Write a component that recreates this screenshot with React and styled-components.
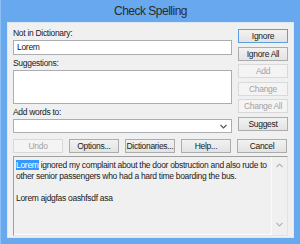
import React from "react";
import styled, { createGlobalStyle } from "styled-components";

const Global = createGlobalStyle`
  html, body { margin: 0; padding: 0; background: #fff; }
  body { font-family: "Liberation Sans", Arial, sans-serif; }
`;

const Frame = styled.div`
  width: 300px;
  height: 244px;
  box-sizing: border-box;
  background: #67a8ef;
  border-left: 1px solid #8fc0f5;
  padding: 0 6px 6px 6px;
  display: flex;
  flex-direction: column;
`;

const TitleBar = styled.div`
  height: 22px;
  display: flex;
  align-items: center;
  justify-content: center;
  font-size: 12px;
  letter-spacing: -0.5px;
  color: #2b2b2b;
`;

const Client = styled.div`
  flex: 1;
  background: #f0f0f0;
  border: 1px solid #dbe8f6;
  padding: 4px 5px 1px 5px;
  display: flex;
  flex-direction: column;
  font-family: "Liberation Sans", Arial, sans-serif;
  font-size: 8.5px;
  letter-spacing: -0.3px;
  color: #1a1a1a;
`;

const Top = styled.div`
  display: grid;
  grid-template-columns: 219px 50px;
  column-gap: 6px;
`;

const LeftCol = styled.div`
  display: flex;
  flex-direction: column;
`;

const Label = styled.div`
  height: 11px;
  line-height: 11px;
  margin-top: ${(p) => p.$mt || 0}px;
  margin-bottom: 1px;
  white-space: nowrap;
`;

const TextBox = styled.div`
  box-sizing: border-box;
  height: ${(p) => p.$h}px;
  background: #fff;
  border: 1px solid #abadb3;
  padding: 0 3px;
  line-height: ${(p) => p.$h - 2}px;
  display: flex;
  align-items: center;
  justify-content: space-between;
`;

const Chevron = styled.svg`
  width: 7px;
  height: 5px;
  margin-right: 1px;
`;

const RightCol = styled.div`
  display: flex;
  flex-direction: column;
  gap: 3.5px;
  padding-top: 2px;
`;

const Button = styled.div`
  box-sizing: border-box;
  width: 50px;
  height: 14px;
  display: flex;
  align-items: center;
  justify-content: center;
  white-space: nowrap;
  background: ${(p) => (p.$disabled ? "#f4f4f4" : "linear-gradient(#f2f2f2, #e3e3e3)")};
  border: 1px solid
    ${(p) => (p.$default ? "#5c9fe0" : p.$disabled ? "#d9d9d9" : "#acacac")};
  color: ${(p) => (p.$disabled ? "#a3a3a3" : "#1a1a1a")};
`;

const ButtonRow = styled.div`
  display: flex;
  gap: 6px;
  margin-top: 6px;
`;

const Doc = styled.div`
  flex: 1;
  margin-top: 3px;
  box-sizing: border-box;
  border: 1px solid #a0a0a0;
  border-right-color: #e3e3e3;
  border-bottom-color: #e3e3e3;
  box-shadow: inset -1px -1px 0 #fff;
  display: flex;
  background: #f0f0f0;
`;

const DocText = styled.div`
  flex: 1;
  padding: 3px 2px;
  line-height: 11px;
`;

const Line = styled.div`
  white-space: nowrap;
  min-height: 11px;
`;

const Sel = styled.span`
  background: #3399ff;
  color: #fff;
`;

const ScrollBar = styled.div`
  width: 15px;
  border-left: 1px solid #fafafa;
  background: #f0f0f0;
  display: flex;
  flex-direction: column;
  justify-content: space-between;
  align-items: center;
  padding: 6px 0 8px;
`;

const Arrow = ({ up }) => (
  <Chevron viewBox="0 0 7 5">
    <path
      d={up ? "M0.5 4 L3.5 1 L6.5 4" : "M0.5 1 L3.5 4 L6.5 1"}
      fill="none"
      stroke="#b5b5b5"
      strokeWidth="1.2"
    />
  </Chevron>
);

export default function App() {
  return (
    <>
      <Global />
      <Frame>
        <TitleBar>Check Spelling</TitleBar>
        <Client>
          <Top>
            <LeftCol>
              <Label $mt={1}>Not in Dictionary:</Label>
              <TextBox $h={15}>Lorem</TextBox>
              <Label $mt={3}>Suggestions:</Label>
              <TextBox $h={34} />
              <Label $mt={3}>Add words to:</Label>
              <TextBox $h={14}>
                <span />
                <Chevron viewBox="0 0 7 5">
                  <path d="M0.5 1 L3.5 4 L6.5 1" fill="none" stroke="#555" strokeWidth="1.1" />
                </Chevron>
              </TextBox>
            </LeftCol>
            <RightCol>
              <Button $default>Ignore</Button>
              <Button>Ignore All</Button>
              <Button $disabled>Add</Button>
              <Button $disabled>Change</Button>
              <Button $disabled>Change All</Button>
              <Button>Suggest</Button>
            </RightCol>
          </Top>
          <ButtonRow>
            <Button $disabled>Undo</Button>
            <Button>Options...</Button>
            <Button>Dictionaries...</Button>
            <Button>Help...</Button>
            <Button>Cancel</Button>
          </ButtonRow>
          <Doc>
            <DocText>
              <Line>
                <Sel>Lorem</Sel> ignored my complaint about the door obstruction and also rude to
              </Line>
              <Line>other senior passengers who had a hard time boarding the bus.</Line>
              <Line />
              <Line>Lorem ajdgfas oashfsdf asa</Line>
            </DocText>
            <ScrollBar>
              <Arrow up />
              <Arrow />
            </ScrollBar>
          </Doc>
        </Client>
      </Frame>
    </>
  );
}
